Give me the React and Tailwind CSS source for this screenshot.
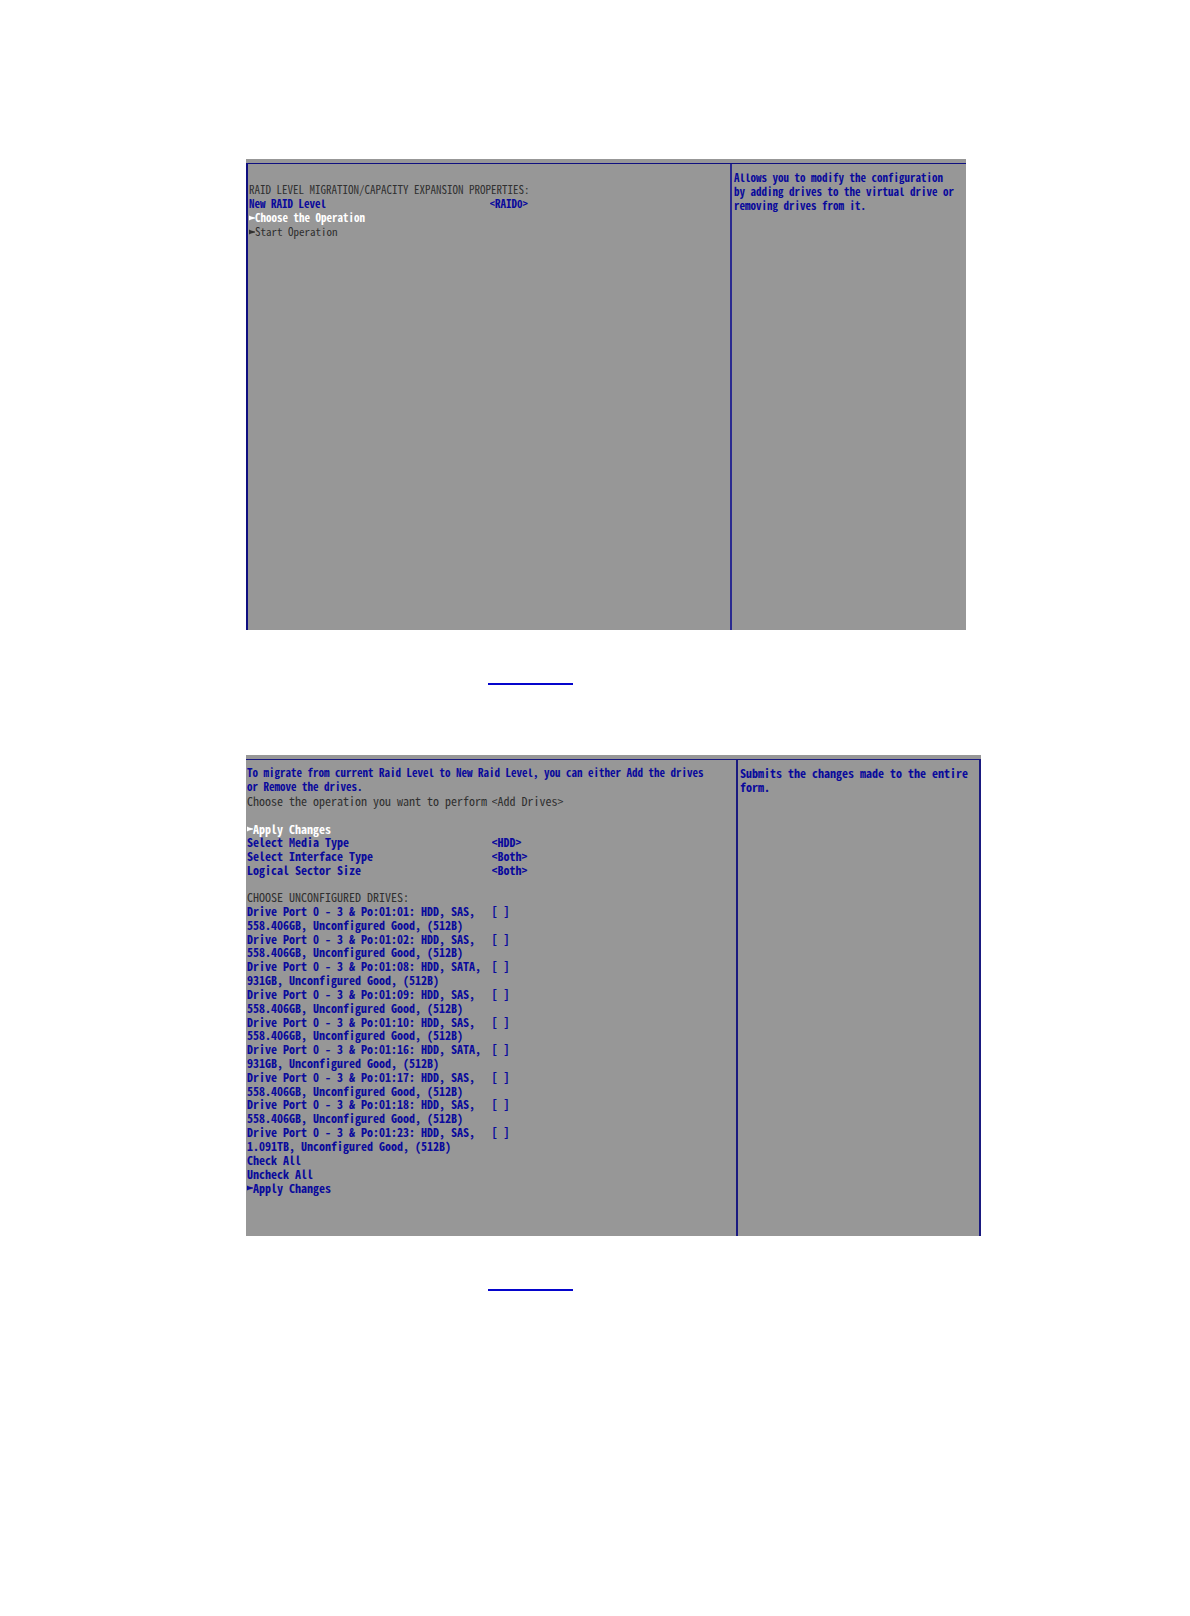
const SAS = '558.406GB, Unconfigured Good, (512B)';
const SATA = '931GB, Unconfigured Good, (512B)';

const DRIVES = [
  { port: '01:01', kind: 'SAS', detail: SAS },
  { port: '01:02', kind: 'SAS', detail: SAS },
  { port: '01:08', kind: 'SATA', detail: SATA },
  { port: '01:09', kind: 'SAS', detail: SAS },
  { port: '01:10', kind: 'SAS', detail: SAS },
  { port: '01:16', kind: 'SATA', detail: SATA },
  { port: '01:17', kind: 'SAS', detail: SAS },
  { port: '01:18', kind: 'SAS', detail: SAS },
  { port: '01:23', kind: 'SAS', detail: '1.091TB, Unconfigured Good, (512B)' },
];

const FILTERS = [
  { id: 'media', label: 'Select Media Type', value: '<HDD>' },
  { id: 'interface', label: 'Select Interface Type', value: '<Both>' },
  { id: 'sector', label: 'Logical Sector Size', value: '<Both>' },
];

function Arrow() {
  return (
    <svg aria-hidden="true" viewBox="0 0 6 6" className="mt-0.5 h-1.5 w-1.5 shrink-0 fill-current">
      <path d="M0 0.5 L2 1.6 L6 2.6 V3.4 L2 4.4 L0 5.5 Z" />
    </svg>
  );
}

function Action({ arrow, className = '', children }) {
  return (
    <button type="button" className={`flex items-center justify-self-start whitespace-pre text-left ${className}`}>
      {arrow && <Arrow />}
      {children}
    </button>
  );
}

function Option({ id, label, value, className = '' }) {
  return (
    <div className={`grid grid-cols-[1fr_1fr] items-center ${className}`}>
      <label htmlFor={id} className="whitespace-nowrap">{label}</label>
      <select id={id} className="appearance-none justify-self-start bg-transparent p-0">
        <option>{value}</option>
      </select>
    </div>
  );
}

function Drive({ port, kind, detail }) {
  const id = `drive-${port}`;
  return (
    <div className="row-span-2 grid grid-cols-[1fr_1fr] font-bold">
      <label htmlFor={id} className="grid auto-rows-fr whitespace-nowrap">
        <span>{`Drive Port 0 - 3 & Po:${port}: HDD, ${kind},`}</span>
        <span>{detail}</span>
      </label>
      <span className="flex">
        [<input id={id} type="checkbox" className="h-3 w-1.5 appearance-none checked:bg-[#0a0a9c]" />]
      </span>
    </div>
  );
}

function FigureLink({ label }) {
  return (
    <a href="#figure" aria-label={label} className="ml-[488px] block h-[55px] w-[85px] border-b-2 border-[#0505cc]" />
  );
}

export default function App() {
  return (
    <main className="bg-white pt-[159px] pb-80 font-['Noto_Sans_Mono_CJK_SC','Liberation_Mono',monospace] text-[#0a0a9c]">
      <section className="ml-[246px] max-w-[720px] bg-[#979797] pt-1 text-[11px] leading-[14px]">
        <div className="grid min-h-[467px] grid-cols-[482fr_236fr] border-t border-l-2 border-[#0f0f80]">
          <div className="flex flex-col items-stretch pt-[18px] pl-px">
            <h2 className="text-[#303030]">RAID LEVEL MIGRATION/CAPACITY EXPANSION PROPERTIES:</h2>
            <Option id="raid" label="New RAID Level" value="<RAID0>" className="font-bold" />
            <Action arrow className="font-bold text-white">Choose the Operation</Action>
            <Action arrow className="text-[#303030]">Start Operation</Action>
          </div>
          <p className="border-l-2 border-[#2a2a90] pt-1.5 pl-0.5 font-bold">
            Allows you to modify the configuration<br />
            by adding drives to the virtual drive or<br />
            removing drives from it.
          </p>
        </div>
      </section>

      <FigureLink label="Operation selection figure" />

      <section className="mt-[70px] ml-[246px] max-w-[735px] bg-[#979797] pt-1 text-[12px] leading-[13px]">
        <div className="grid min-h-[477px] grid-cols-[490fr_243fr] border-t border-r-2 border-[#1a1a80]">
          <div className="pt-1.5 pb-10 pl-px">
            <div className="grid min-h-[428px] auto-rows-fr">
              <p className="row-span-2 grid auto-rows-fr text-[11px] font-bold whitespace-nowrap">
                <span>To migrate from current Raid Level to New Raid Level, you can either Add the drives</span>
                <span>or Remove the drives.</span>
              </p>
              <Option id="operation" label="Choose the operation you want to perform" value="<Add Drives>" className="text-[#303030]" />
              <span />
              <Action arrow className="font-bold text-white">Apply Changes</Action>
              {FILTERS.map((f) => <Option key={f.id} {...f} className="font-bold" />)}
              <span />
              <h2 className="text-[#303030]">CHOOSE UNCONFIGURED DRIVES:</h2>
              {DRIVES.map((d) => <Drive key={d.port} {...d} />)}
              <Action className="font-bold">Check All</Action>
              <Action className="font-bold">Uncheck All</Action>
              <Action arrow className="font-bold">Apply Changes</Action>
            </div>
          </div>
          <p className="border-l-2 border-[#1a1a80] pt-1.5 pl-0.5 text-[12px] leading-[14px] font-bold">
            Submits the changes made to the entire<br />
            form.
          </p>
        </div>
      </section>

      <FigureLink label="Drive selection figure" />
    </main>
  );
}
